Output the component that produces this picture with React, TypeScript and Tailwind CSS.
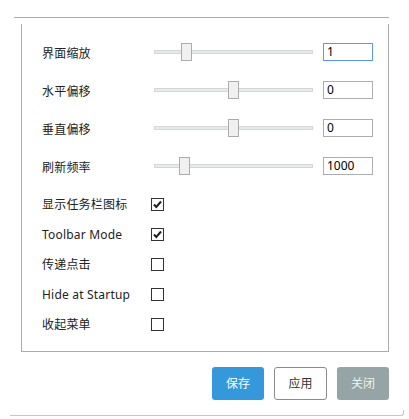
import React from "react";

const font = { fontFamily: '"Noto Sans", "Noto Sans CJK SC", sans-serif' };

function SliderRow({ label, thumb, value, focused }: { label: string; thumb: number; value: string; focused?: boolean }) {
  return (
    <div className="flex h-[18px] items-center">
      <div className="w-[112px] pt-[3px] text-[12px] leading-none tracking-[0.2px] text-[#222222]">{label}</div>
      <div className="relative h-[18px] w-[159px]">
        <div className="absolute left-0 right-0 top-[7px] h-[4px] border border-[#d6d6d6] bg-[#e7eaea]" />
        <div
          className="absolute top-0 h-[18px] w-[11px] border border-[#acacac] bg-[#f0f0f0]"
          style={{ left: thumb }}
        />
      </div>
      <div
        className={
          "ml-[10px] flex h-[18px] w-[50px] items-center border pl-[3px] text-[12px] leading-none text-black " +
          (focused ? "border-[#569de5]" : "border-[#abadb3]")
        }
      >
        {value}
      </div>
    </div>
  );
}

function CheckRow({ label, checked }: { label: string; checked: boolean }) {
  return (
    <div className="flex h-[13px] items-center">
      <div className="w-[109px] pt-[1px] text-[12px] leading-none tracking-[0.2px] text-[#222222]">{label}</div>
      <div className="flex h-[13px] w-[13px] items-center justify-center border border-[#333333] bg-white">
        {checked && (
          <svg width="11" height="11" viewBox="0 0 11 11">
            <polyline points="2,5.5 4.3,8 9,2.5" fill="none" stroke="#1f1f1f" strokeWidth="2" />
          </svg>
        )}
      </div>
    </div>
  );
}

export default function App() {
  return (
    <div className="h-[419px] w-[409px] bg-white" style={font}>
      <div className="h-[17px]" />
      <div className="ml-[14px] w-[375px] border-t border-[#ababab]">
        <div className="ml-[7px] border-b border-r border-[#ababab]">
          <div className="mt-[6px] flex h-[327px] flex-col border-l border-[#ababab] pl-[20px] pt-[19px]">
            <div className="flex flex-col gap-[20px]">
              <SliderRow label="界面缩放" thumb={27} value="1" focused />
              <SliderRow label="水平偏移" thumb={74} value="0" />
              <SliderRow label="垂直偏移" thumb={74} value="0" />
              <SliderRow label="刷新频率" thumb={25} value="1000" />
            </div>
            <div className="mt-[23px] flex flex-col gap-[17px]">
              <CheckRow label="显示任务栏图标" checked />
              <CheckRow label="Toolbar Mode" checked />
              <CheckRow label="传递点击" checked={false} />
              <CheckRow label="Hide at Startup" checked={false} />
              <CheckRow label="收起菜单" checked={false} />
            </div>
          </div>
        </div>
      </div>
      <div className="mt-[15px] flex justify-end gap-[10px] pr-[20px]">
        <div className="flex h-[33px] w-[52px] items-center justify-center rounded-[3px] bg-[#3498db] text-[12px] text-white">
          保存
        </div>
        <div className="flex h-[33px] w-[53px] items-center justify-center rounded-[3px] border border-[#8c8c8c] bg-white text-[12px] text-[#333333]">
          应用
        </div>
        <div className="flex h-[33px] w-[52px] items-center justify-center rounded-[3px] bg-[#95a5a6] text-[12px] text-[#eef2f2]">
          关闭
        </div>
      </div>
      <div className="ml-[10px] mt-[10px] h-[6px] w-[394px] rounded-br-[3px] border-b border-r border-[#c6c6c6]" />
    </div>
  );
}
